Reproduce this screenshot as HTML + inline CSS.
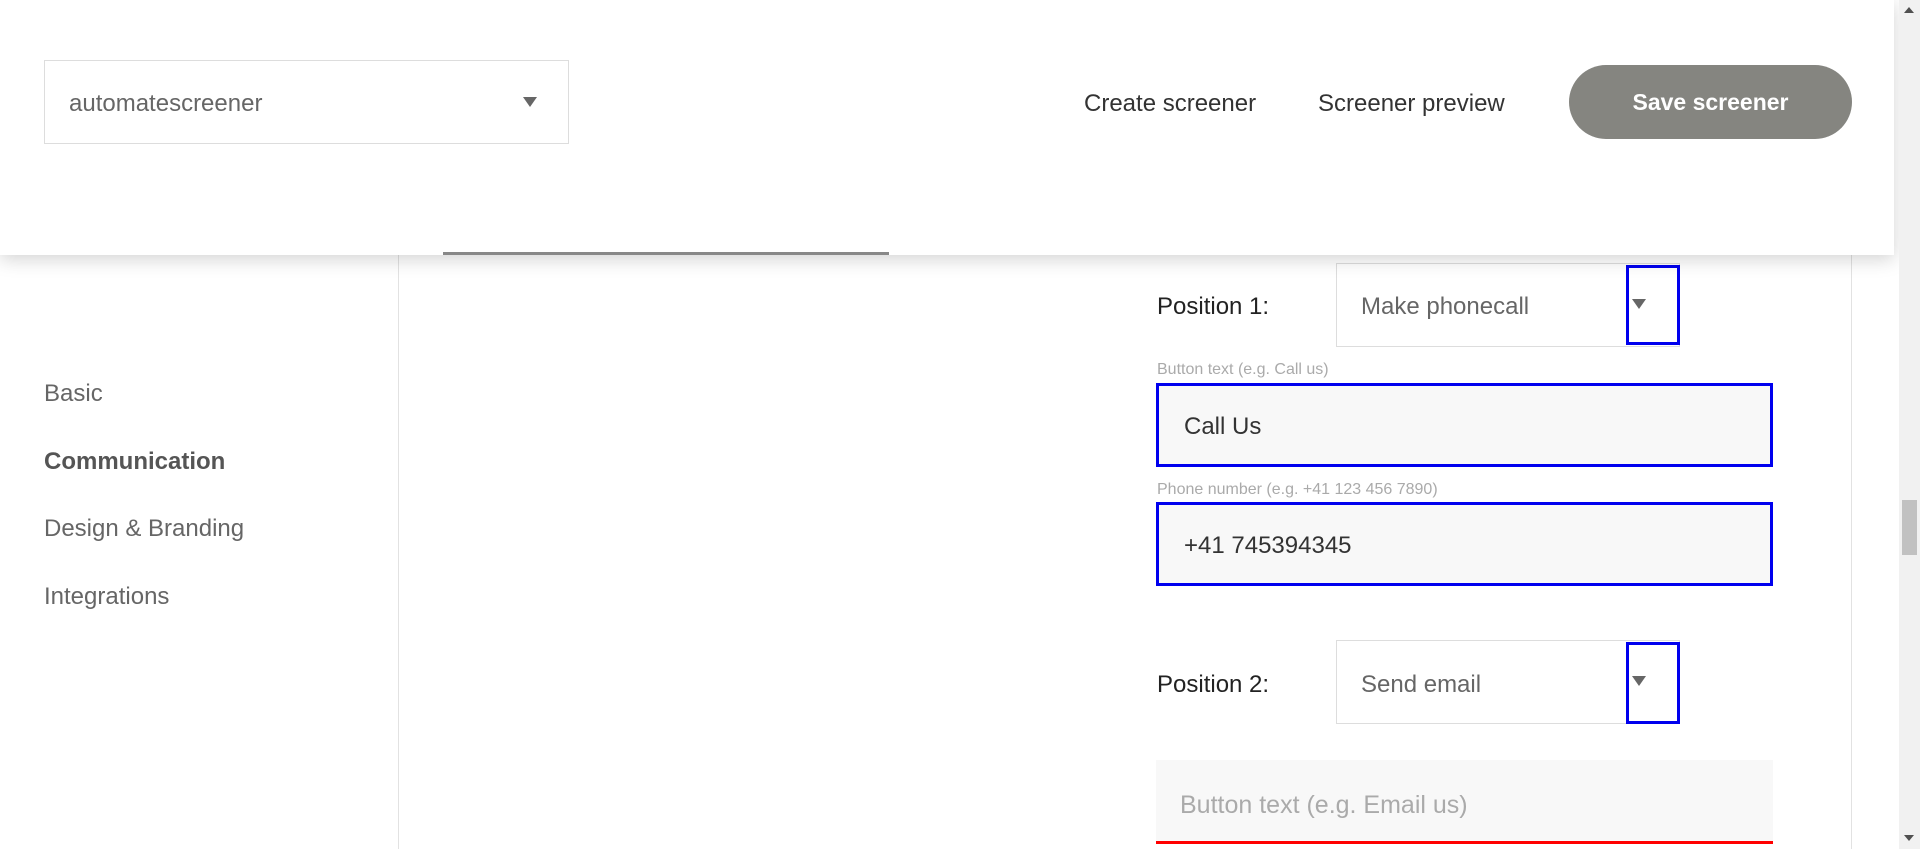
<!DOCTYPE html>
<html><head><meta charset="utf-8"><style>
*{margin:0;padding:0;box-sizing:border-box}
body{width:1920px;height:849px;overflow:hidden;background:#fff;font-family:"Liberation Sans",sans-serif;position:relative}
.a{position:absolute}
.hdr{left:0;top:0;width:1894px;height:255px;background:#fff;box-shadow:0 4px 18px rgba(0,0,0,.18);z-index:5}
.sel{border:1px solid #ddd;background:#fff}
.tri{width:0;height:0;border-left:7px solid transparent;border-right:7px solid transparent;border-top:10px solid #666}
.nav{left:44px;font-size:24px;color:#666}
.lbl{font-size:24px;color:#222}
.sm{font-size:16px;color:#aaa}
.inp{background:#f8f8f8;border:3px solid #0000ee;font-size:24px;color:#333;padding-left:25px;padding-top:4px;display:flex;align-items:center}
.blue{border:3px solid #0000ee}
</style></head><body>
<div class="a hdr">
 <div class="a sel" style="left:44px;top:60px;width:525px;height:84px"></div>
 <div class="a" style="left:69px;top:90px;font-size:24px;color:#666">automatescreener</div>
 <div class="a tri" style="left:523px;top:97px"></div>
 <div class="a" style="left:1084px;top:90px;font-size:24px;color:#333">Create screener</div>
 <div class="a" style="left:1318px;top:90px;font-size:24px;color:#333">Screener preview</div>
 <div class="a" style="left:1569px;top:65px;width:283px;height:74px;border-radius:37px;background:#858580;color:#fff;font-weight:bold;font-size:23px;display:flex;align-items:center;justify-content:center">Save screener</div>
</div>
<div class="a" style="left:443px;top:252px;width:446px;height:3px;background:#888;z-index:10"></div>
<div class="a" style="left:398px;top:255px;width:1px;height:594px;background:#e2e2e2"></div>
<div class="a" style="left:1851px;top:255px;width:1px;height:594px;background:#e2e2e2"></div>
<div class="a nav" style="top:380px">Basic</div>
<div class="a nav" style="top:448px;font-weight:bold;color:#555">Communication</div>
<div class="a nav" style="top:515px">Design &amp; Branding</div>
<div class="a nav" style="top:583px">Integrations</div>

<div class="a lbl" style="left:1157px;top:293px">Position 1:</div>
<div class="a sel" style="left:1336px;top:263px;width:344px;height:84px"></div>
<div class="a" style="left:1361px;top:293px;font-size:24px;color:#666">Make phonecall</div>
<div class="a blue" style="left:1626px;top:265px;width:54px;height:80px"></div>
<div class="a tri" style="left:1632px;top:299px"></div>
<div class="a sm" style="left:1157px;top:361px">Button text (e.g. Call us)</div>
<div class="a inp" style="left:1156px;top:383px;width:617px;height:84px">Call Us</div>
<div class="a sm" style="left:1157px;top:481px">Phone number (e.g. +41 123 456 7890)</div>
<div class="a inp" style="left:1156px;top:502px;width:617px;height:84px">+41 745394345</div>

<div class="a lbl" style="left:1157px;top:671px">Position 2:</div>
<div class="a sel" style="left:1336px;top:640px;width:344px;height:84px"></div>
<div class="a" style="left:1361px;top:671px;font-size:24px;color:#666">Send email</div>
<div class="a blue" style="left:1626px;top:642px;width:54px;height:82px"></div>
<div class="a tri" style="left:1632px;top:676px"></div>
<div class="a" style="left:1156px;top:760px;width:617px;height:84px;background:#f8f8f8;border-bottom:3px solid #f00"></div>
<div class="a" style="left:1180px;top:791px;font-size:25px;color:#aaa">Button text (e.g. Email us)</div>

<div class="a" style="left:1899px;top:0;width:21px;height:849px;background:#f1f1f1;z-index:6">
 <div class="a" style="left:5px;top:7px;border-left:5px solid transparent;border-right:5px solid transparent;border-bottom:6px solid #505050"></div>
 <div class="a" style="left:3px;top:500px;width:15px;height:55px;background:#c1c1c1"></div>
 <div class="a" style="left:5px;top:835px;border-left:5px solid transparent;border-right:5px solid transparent;border-top:6px solid #505050"></div>
</div>
</body></html>
